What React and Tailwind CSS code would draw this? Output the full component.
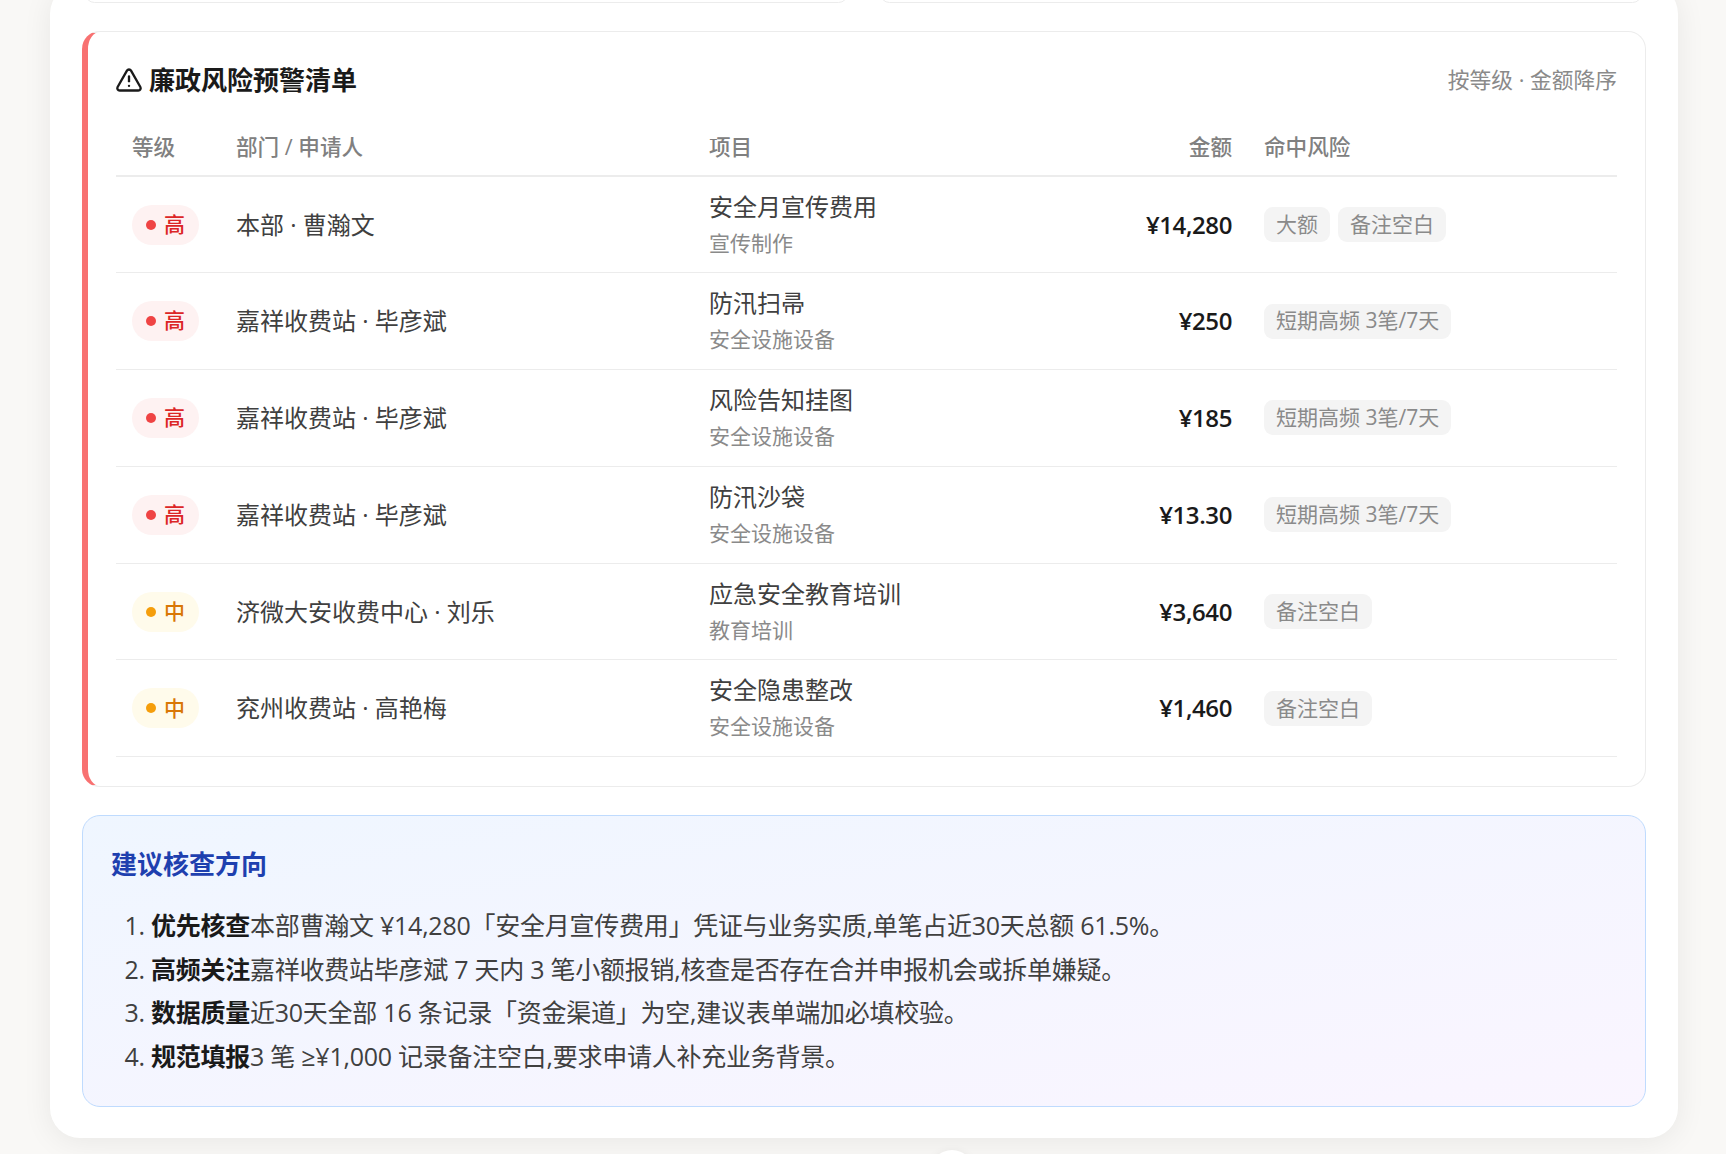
import React from "react";
import { TriangleAlert } from "lucide-react";

const rows = [
  { level: "高", owner: "本部 · 曹瀚文", name: "安全月宣传费用", type: "宣传制作", amount: "¥14,280", tags: ["大额", "备注空白"] },
  { level: "高", owner: "嘉祥收费站 · 毕彦斌", name: "防汛扫帚", type: "安全设施设备", amount: "¥250", tags: ["短期高频 3笔/7天"] },
  { level: "高", owner: "嘉祥收费站 · 毕彦斌", name: "风险告知挂图", type: "安全设施设备", amount: "¥185", tags: ["短期高频 3笔/7天"] },
  { level: "高", owner: "嘉祥收费站 · 毕彦斌", name: "防汛沙袋", type: "安全设施设备", amount: "¥13.30", tags: ["短期高频 3笔/7天"] },
  { level: "中", owner: "济微大安收费中心 · 刘乐", name: "应急安全教育培训", type: "教育培训", amount: "¥3,640", tags: ["备注空白"] },
  { level: "中", owner: "兖州收费站 · 高艳梅", name: "安全隐患整改", type: "安全设施设备", amount: "¥1,460", tags: ["备注空白"] },
];

const advice = [
  { lead: "优先核查", text: "本部曹瀚文 ¥14,280「安全月宣传费用」凭证与业务实质,单笔占近30天总额 61.5%。" },
  { lead: "高频关注", text: "嘉祥收费站毕彦斌 7 天内 3 笔小额报销,核查是否存在合并申报机会或拆单嫌疑。" },
  { lead: "数据质量", text: "近30天全部 16 条记录「资金渠道」为空,建议表单端加必填校验。" },
  { lead: "规范填报", text: "3 笔 ≥¥1,000 记录备注空白,要求申请人补充业务背景。" },
];

function LevelBadge({ level }) {
  const high = level === "高";
  return (
    <span
      className={`inline-flex h-10 items-center gap-2 rounded-full px-[14px] text-[21px] font-medium ${
        high ? "bg-[#fef2f2] text-[#dc2626]" : "bg-[#fffbeb] text-[#d97706]"
      }`}
    >
      <span className={`h-[10px] w-[10px] rounded-full ${high ? "bg-[#ef4444]" : "bg-[#f59e0b]"}`} />
      {level}
    </span>
  );
}

export default function App() {
  return (
    <div className="relative h-[1154px] overflow-hidden bg-[#f9f8f6] font-['Open_Sans','Noto_Sans_CJK_SC',sans-serif] text-[#404040]">
      <div className="-mt-[16px] mr-[48px] ml-[50px] rounded-[30px] bg-white px-[32px] pb-[31px] shadow-[0_4px_30px_rgba(0,0,0,0.07)]">
        {/* end of the cards above */}
        <div className="grid grid-cols-2 gap-[32px] pr-[4px] pl-[3px]">
          <div className="h-[19px] rounded-[16px] border border-[#ececec]" />
          <div className="h-[19px] rounded-[16px] border border-[#ececec]" />
        </div>

        {/* Warning list */}
        <section className="mt-[28px] h-[756px] rounded-[18px] border border-l-[6px] border-[#ececec] border-l-[#f87171] px-[28px]">
          <div className="flex h-[96px] items-center justify-between">
            <h2 className="flex items-center gap-[6px] text-[26px] font-bold text-[#1a1a1a]">
              <TriangleAlert size={28} strokeWidth={2} className="-ml-[1px]" />
              廉政风险预警清单
            </h2>
            <span className="text-[21.75px] text-[#8a8a8a]">按等级 · 金额降序</span>
          </div>

          <table className="w-full table-fixed border-collapse">
            <thead>
              <tr className="h-[48px] border-b-2 border-[#ececec] text-left text-[21.6px] text-[#808080]">
                <th className="w-[104px] px-4 pb-[8px] font-medium">等级</th>
                <th className="w-[473px] px-4 pb-[8px] font-medium">部门 / 申请人</th>
                <th className="px-4 pb-[8px] font-medium">项目</th>
                <th className="w-[180px] px-4 pb-[8px] text-right font-medium">金额</th>
                <th className="w-[369px] px-4 pb-[8px] font-medium">命中风险</th>
              </tr>
            </thead>
            <tbody>
              {rows.map((row, index) => (
                <tr key={index} className="h-[96.8px] border-b border-[#ececec]">
                  <td className="px-4">
                    <LevelBadge level={row.level} />
                  </td>
                  <td className="px-4 text-[24px]">{row.owner}</td>
                  <td className="px-4">
                    <div className="text-[24px] leading-[36px]">{row.name}</div>
                    <div className="text-[21px] leading-[36px] text-[#8a8a8a]">{row.type}</div>
                  </td>
                  <td className="px-4 text-right text-[24px] font-semibold tracking-[-0.4px] text-[#1a1a1a]">{row.amount}</td>
                  <td className="px-4">
                    <div className="flex gap-2">
                      {row.tags.map((tag) => (
                        <span key={tag} className="flex h-[35px] items-center rounded-[9px] bg-[#f4f4f4] px-3 text-[21px] text-[#8a8a8a]">
                          {tag}
                        </span>
                      ))}
                    </div>
                  </td>
                </tr>
              ))}
            </tbody>
          </table>
        </section>

        {/* Suggestions */}
        <section className="mt-[28px] h-[292px] rounded-[18px] border border-[#bfdbfe] bg-linear-to-br from-[#eff6ff] to-[#faf5ff] px-[28px] pt-[30px]">
          <h3 className="text-[26px] leading-[36px] font-bold text-[#1e40af]">建议核查方向</h3>
          <ol className="mt-[22px] list-decimal pl-[40px] text-[25px] leading-[43.6px] tracking-[-0.25px]">
            {advice.map((item) => (
              <li key={item.lead}>
                <strong className="font-bold text-[#1a1a1a]">{item.lead}</strong>
                {item.text}
              </li>
            ))}
          </ol>
        </section>
      </div>

      {/* floating round button, cut off by the window */}
      <div className="absolute top-[1150px] left-[930px] h-11 w-11 rounded-full bg-white shadow-[0_2px_10px_rgba(0,0,0,0.08)]" />
    </div>
  );
}
